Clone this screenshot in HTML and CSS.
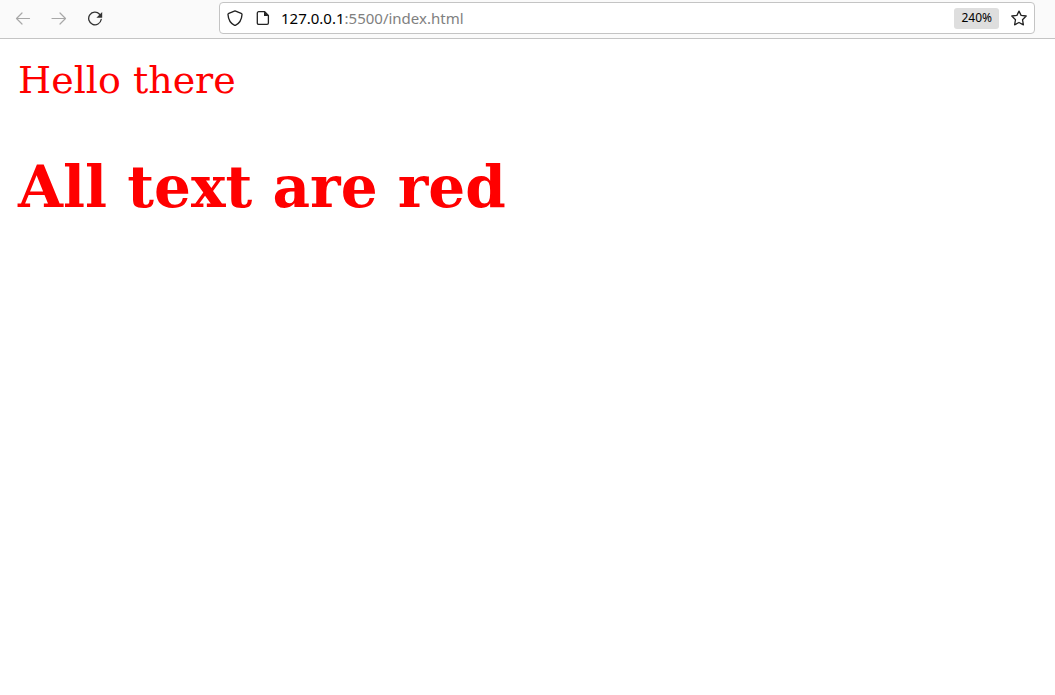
FILE: index.html
```html
<!DOCTYPE html>
<html lang="en">
<head>
<meta charset="utf-8">
<title>Hello there</title>
<link rel="stylesheet" href="styles.css">
</head>
<body>
<header class="toolbar">
  <nav class="nav" aria-label="History">
    <button class="icon-button" disabled aria-label="Back"><svg class="icon" viewBox="0 0 16 16"><path d="M14.500 8.500H1.500M7 3l-5.500 5.500L7 14"/></svg></button>
    <button class="icon-button" disabled aria-label="Forward"><svg class="icon" viewBox="0 0 16 16"><path d="M1 8.500h13.500M9 3l5.500 5.500L9 14"/></svg></button>
    <button class="icon-button" aria-label="Reload"><svg class="icon icon-bold" viewBox="0 0 16 16"><path d="M12.600 4.200A6.300 6.300 0 1 0 14.200 9.500"/><path class="solid" d="M15.200 2v5.800H9.400z"/></svg></button>
  </nav>
  <div class="address">
    <button class="icon-button small" aria-label="Tracking protection"><svg class="icon icon-bold" viewBox="0 0 16 16"><path d="M8 .9 14.200 3.300c.7.300.9.700.8 1.300C14.700 9.700 12.500 13.500 8 15.600 3.500 13.500 1.300 9.700 1 4.600c-.1-.6.100-1 .8-1.300z"/></svg></button>
    <button class="icon-button small" aria-label="Site information"><svg class="icon icon-bold" viewBox="0 0 16 16"><path d="M3.700 1.700h6l3.700 3.700v7.600a1.400 1.400 0 0 1-1.400 1.400H3.700a1.400 1.400 0 0 1-1.400-1.400V3.100a1.400 1.400 0 0 1 1.400-1.400z"/><path class="solid" d="M9 1.500V6h4.700z"/></svg></button>
    <div class="url">
      <label for="url">127.0.0.1</label>
      <input id="url" type="text" value=":5500/index.html" spellcheck="false">
    </div>
    <button class="zoom">240%</button>
    <button class="icon-button small" aria-label="Bookmark this page"><svg class="icon icon-bold" viewBox="0 0 16 16"><path d="M8 1.100 10.100 5.400 15.200 6 11.500 9.700 12.400 14.800 8 12.500 3.600 14.800 4.500 9.700.8 6 5.900 5.400z"/></svg></button>
  </div>
</header>
<main class="page">
  <div class="greeting">Hello there</div>
  <h1 class="title">All text are red</h1>
</main>
</body>
</html>
```
FILE: styles.css
```css
* {
  box-sizing: border-box;
}

body {
  margin: 0;
  background: #fff;
}

.toolbar {
  display: flex;
  gap: 112px;
  align-items: flex-start;
  padding: 2px 20px 4px 11px;
  background: #fafafa;
  border-bottom: 1px solid #c4c4c4;
  font-family: "Noto Sans", sans-serif;
}

.nav {
  display: flex;
  gap: 12px;
  padding-top: 4px;
}

.icon-button {
  display: flex;
  align-items: center;
  justify-content: center;
  flex: none;
  width: 24px;
  height: 24px;
  padding: 0;
  border: 0;
  background: none;
  color: #333;
}

.icon-button:disabled {
  color: #a8a8a8;
}

.icon-button.small {
  width: 28px;
  color: #222;
}

.icon {
  width: 16px;
  height: 16px;
  fill: none;
  stroke: currentColor;
  stroke-width: 1.2;
  stroke-linecap: round;
  stroke-linejoin: round;
}

.icon-bold {
  stroke-width: 1.3;
}

.solid {
  fill: currentColor;
  stroke: none;
}

.address {
  display: flex;
  flex: 1;
  align-items: center;
  min-width: 0;
  height: 32px;
  padding: 0 1px;
  background: #fff;
  border: 1px solid #c4c4c4;
  border-radius: 4px;
}

.url {
  display: flex;
  flex: 1;
  align-items: center;
  min-width: 0;
  padding-left: 4px;
  font-size: 15px;
  line-height: 20px;
  color: #000;
}

.url input {
  flex: 1;
  min-width: 0;
  padding: 0;
  border: 0;
  outline: 0;
  background: none;
  font: inherit;
  color: #808080;
}

.zoom {
  height: 21px;
  margin-right: 6px;
  padding: 0 7px;
  border: 0;
  border-radius: 3px;
  background: #dedede;
  font: 12px/20px "Noto Sans", sans-serif;
  color: #000;
}

.page {
  padding: 19px 18px;
  font-family: "DejaVu Serif", serif;
  color: #f00;
}

.greeting {
  font-size: 38px;
  line-height: 45px;
}

.title {
  margin: 50px 0 0;
  font-size: 58px;
  line-height: 68px;
}
```
